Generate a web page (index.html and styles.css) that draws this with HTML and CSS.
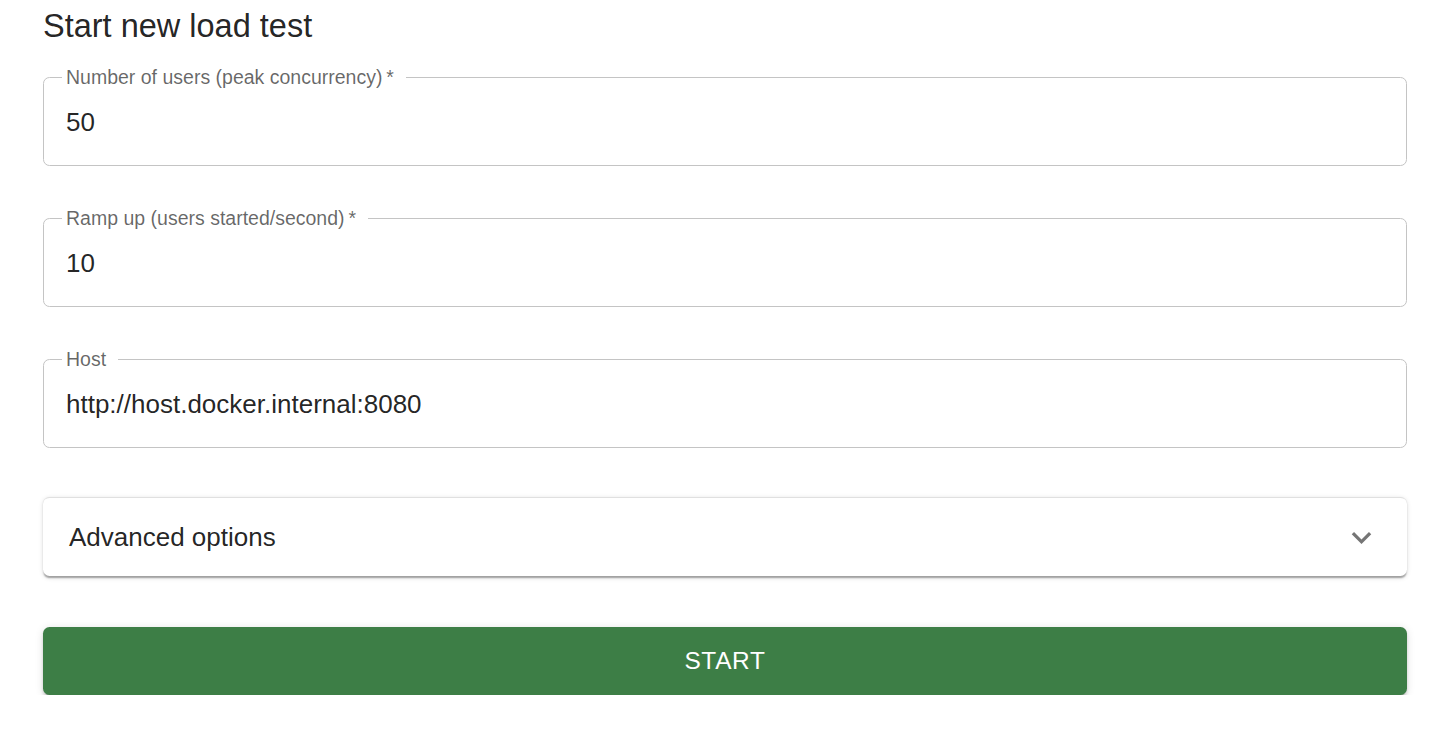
FILE: index.html
```html
<!DOCTYPE html>
<html lang="en">
<head>
<meta charset="utf-8">
<title>Start new load test</title>
<link rel="stylesheet" href="styles.css">
</head>
<body>
<main class="page">
  <h1 class="title">Start new load test</h1>
  <form class="form">
    <fieldset class="field">
      <legend class="field-label">Number of users (peak concurrency)<span class="req">&thinsp;*</span></legend>
      <div class="field-value">50</div>
    </fieldset>
    <fieldset class="field">
      <legend class="field-label">Ramp up (users started/second)<span class="req">&thinsp;*</span></legend>
      <div class="field-value">10</div>
    </fieldset>
    <fieldset class="field">
      <legend class="field-label">Host</legend>
      <div class="field-value">http://host.docker.internal:8080</div>
    </fieldset>
    <div class="accordion">
      <span class="accordion-title">Advanced options</span>
      <svg class="chevron" viewBox="0 0 24 24" aria-hidden="true"><path d="M16.59 8.59 12 13.17 7.41 8.59 6 10l6 6 6-6z"/></svg>
    </div>
    <button type="button" class="start">Start</button>
  </form>
</main>
</body>
</html>
```
FILE: styles.css
```css
html, body {
  margin: 0;
  padding: 0;
  background: #ffffff;
}
body {
  font-family: "Liberation Sans", Arial, Helvetica, sans-serif;
  color: rgba(0, 0, 0, 0.87);
}
.page {
  padding: 0 33px 0 43px;
}
.title {
  margin: 0;
  font-size: 32.5px;
  line-height: 52px;
  font-weight: 400;
  color: rgba(0, 0, 0, 0.87);
}
.form {
  display: flex;
  flex-direction: column;
  margin-top: 14px;
}
.field {
  margin: 0 0 41px 0;
  padding: 0;
  border: 1px solid #c4c4c4;
  border-radius: 6.5px;
  min-width: 0;
}
.field-label {
  margin-left: 18px;
  padding: 0 12px 0 4px;
  font-size: 19.5px;
  line-height: 22px;
  color: rgba(0, 0, 0, 0.6);
}
.field-value {
  padding: 16px 21px 24px 22px;
  font-size: 26px;
  line-height: 37px;
  color: rgba(0, 0, 0, 0.87);
}
.accordion {
  margin-top: 8px;
  height: 79px;
  box-sizing: border-box;
  display: flex;
  align-items: center;
  justify-content: space-between;
  padding: 1px 26px 0 26px;
  border-top: 1px solid #e0e0e0;
  border-radius: 6.5px;
  background: #ffffff;
  box-shadow: 0 3px 1.6px -1.6px rgba(0, 0, 0, 0.2),
              0 1.6px 1.6px 0 rgba(0, 0, 0, 0.14),
              0 1.6px 5px 0 rgba(0, 0, 0, 0.12);
}
.accordion-title {
  font-size: 26px;
  line-height: 37px;
  color: rgba(0, 0, 0, 0.87);
}
.chevron {
  width: 39px;
  height: 39px;
  fill: rgba(0, 0, 0, 0.54);
}
.start {
  margin-top: 51px;
  height: 68px;
  border: none;
  border-radius: 6.5px;
  background: #3d7e46;
  color: #ffffff;
  font-family: "Liberation Sans", Arial, Helvetica, sans-serif;
  font-size: 24.4px;
  letter-spacing: 0.7px;
  text-transform: uppercase;
  cursor: pointer;
  box-shadow: 0 5px 1.6px -3.2px rgba(0, 0, 0, 0.2),
              0 3px 3px 0 rgba(0, 0, 0, 0.14),
              0 1.6px 8px 0 rgba(0, 0, 0, 0.12);
}
```
